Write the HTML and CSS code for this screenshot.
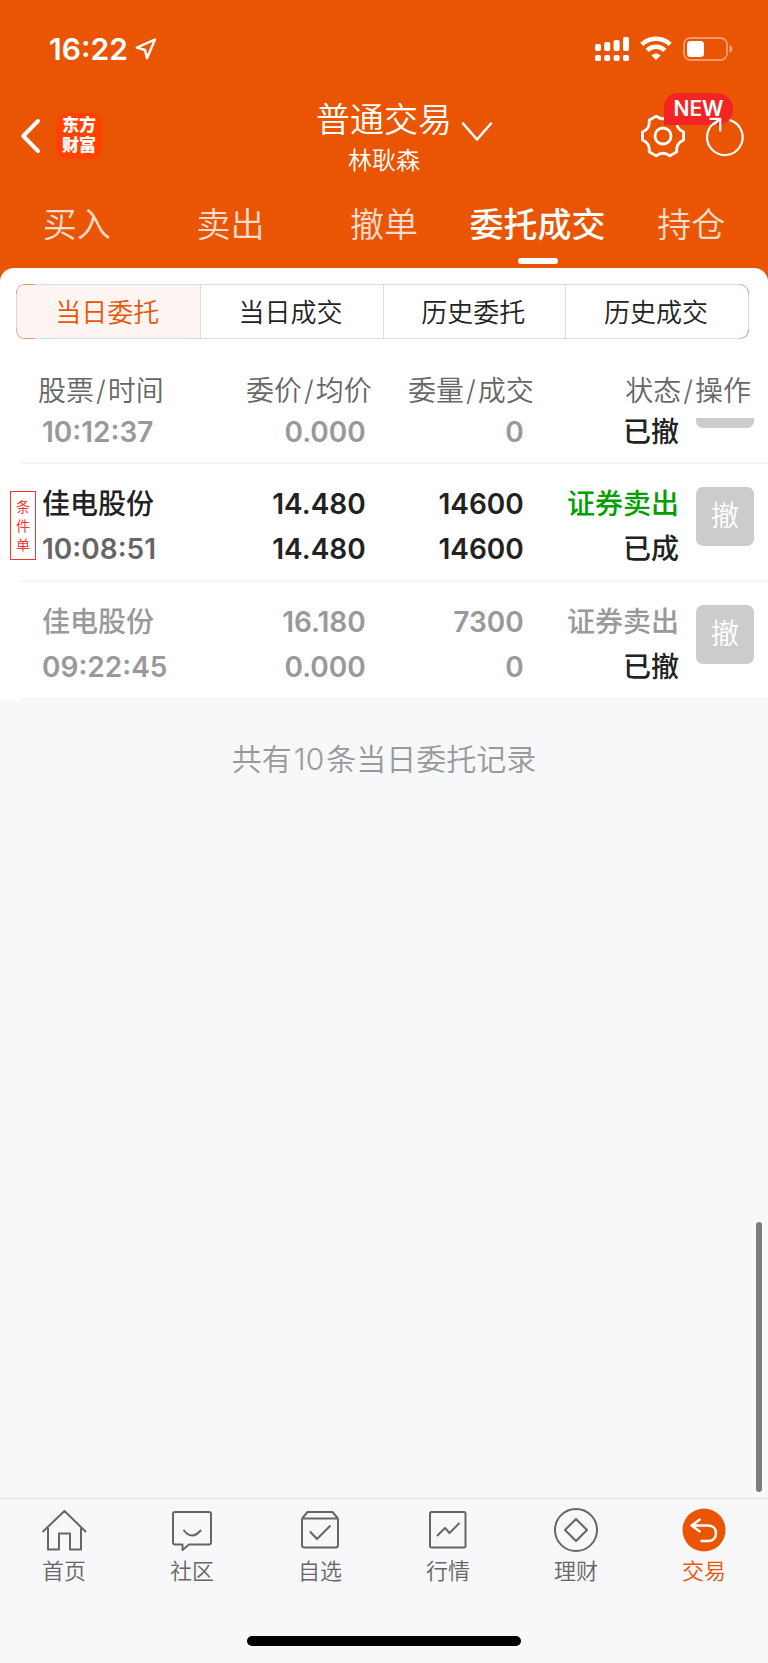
FILE: index.html
```html
<!DOCTYPE html>
<html lang="zh-CN">
<head>
  <meta charset="UTF-8">
  <title>普通交易 - 委托成交</title>
  <meta name="viewport" content="width=device-width, initial-scale=1.0">
  <link rel="stylesheet" href="styles.css">
</head>
<body>

  <header class="header">
    <div class="status-bar">
      <span class="time">16:22</span>
      <svg class="locate" width="22" height="24" viewBox="0 0 22 24" fill="none" stroke="#fff" stroke-width="2.4" stroke-linejoin="round"><path d="M20 2.5 L1.8 10.6 L10 13 L12 21.2 Z"/></svg>
      <div class="status-icons">
        <svg width="34" height="26" viewBox="0 0 34 26" fill="#fff">
          <rect x="0" y="8" width="6" height="7" rx="1.8"/><rect x="9.2" y="6" width="6" height="9" rx="1.8"/><rect x="18.6" y="4" width="6" height="11" rx="1.8"/><rect x="28" y="1" width="6" height="14" rx="1.8"/>
          <rect x="0" y="19" width="6" height="6" rx="1.8"/><rect x="9.2" y="19" width="6" height="6" rx="1.8"/><rect x="18.6" y="19" width="6" height="6" rx="1.8"/><rect x="28" y="19" width="6" height="6" rx="1.8"/>
        </svg>
        <svg width="32" height="26" viewBox="0 0 32 26" fill="none" stroke="#fff" stroke-width="4.6">
          <path d="M1.8 8.4 A20.5 20.5 0 0 1 30.2 8.4"/>
          <path d="M7.2 14.4 A12.4 12.4 0 0 1 24.8 14.4"/>
          <path d="M16 24 L11.4 19.4 A6.6 6.6 0 0 1 20.6 19.4 Z" fill="#fff" stroke="none"/>
        </svg>
        <svg width="50" height="26" viewBox="0 0 50 26">
          <rect x="1" y="2" width="43" height="22" rx="6.5" fill="none" stroke="#fff" stroke-opacity=".42" stroke-width="1.8"/>
          <rect x="4" y="5" width="17" height="16" rx="3.5" fill="#fff"/>
          <path d="M46.5 9 Q49.5 10.5 49.5 13 T46.5 17 Z" fill="#fff" fill-opacity=".5"/>
        </svg>
      </div>
    </div>

    <div class="title-bar">
      <div class="title-left">
        <button class="icon-btn" aria-label="返回">
          <svg width="20" height="36" viewBox="0 0 20 36" fill="none" stroke="#fff" stroke-width="4" stroke-linecap="round" stroke-linejoin="round"><path d="M18 3 L3.2 18 L18 33"/></svg>
        </button>
        <a class="logo" href="#">东方<br>财富</a>
      </div>
      <div class="title-text">
        <h1>普通交易</h1>
        <p>林耿森</p>
      </div>
      <div class="title-right">
        <button class="icon-btn switch" aria-label="切换账户">
          <svg width="32" height="20" viewBox="0 0 32 20" fill="none" stroke="#fff" stroke-width="2.6" stroke-linecap="round" stroke-linejoin="round"><path d="M2 1.5 L16 17.5 L30 1.5"/></svg>
        </button>
        <button class="icon-btn setting" aria-label="设置">
          <svg width="44" height="44" viewBox="0 0 44 44" fill="none" stroke="#fff" stroke-width="2.8" stroke-linejoin="round">
            <path d="M28.8 2.1 L35.8 6.2 Q34.6 14.8 42.6 18 L42.6 26 Q34.6 29.3 35.8 37.8 L28.8 41.9 Q22 36.5 15.2 41.9 L8.2 37.8 Q9.4 29.3 1.4 26 L1.4 18 Q9.4 14.8 8.2 6.2 L15.2 2.1 Q22 7.5 28.8 2.1 Z"/>
            <circle cx="22" cy="22" r="8"/>
          </svg>
          <span class="badge">NEW</span>
        </button>
        <button class="icon-btn refresh" aria-label="刷新">
          <svg width="40" height="40" viewBox="0 0 40 40" fill="none" stroke="#fff" stroke-width="2.2">
            <path d="M24.6 4.1 A17.8 17.8 0 1 1 12.6 5"/>
            <path d="M4.5 2.8 H15.2 V15.5 M15.2 2.8 L9 8.5"/>
          </svg>
        </button>
      </div>
    </div>

    <nav class="tabs">
      <a href="#">买入</a>
      <a href="#">卖出</a>
      <a href="#">撤单</a>
      <a href="#" class="active">委托成交</a>
      <a href="#">持仓</a>
    </nav>
  </header>

  <main class="main">
    <section class="panel">
      <div class="segment">
        <div class="segment-inner">
          <button class="selected">当日委托</button>
          <button>当日成交</button>
          <button>历史委托</button>
          <button>历史成交</button>
        </div>
      </div>

      <table class="orders">
        <colgroup>
          <col class="col-stock"><col class="col-price"><col class="col-amount"><col class="col-status"><col class="col-action">
        </colgroup>
        <thead>
          <tr>
            <th class="stock">股票<span class="space">/</span>时间</th>
            <th>委价<span class="space">/</span>均价</th>
            <th>委量<span class="space">/</span>成交</th>
            <th colspan="2" class="last">状态<span class="space">/</span>操作</th>
          </tr>
        </thead>
        <tbody>
          <!-- row scrolled half under the header -->
          <tr class="gray partial">
            <td class="stock">10:12:37</td>
            <td class="price">0.000</td>
            <td class="amount">0</td>
            <td class="dark">已撤</td>
            <td class="action"><button class="cancel cut" aria-label="撤"></button></td>
          </tr>
          <tr>
            <td class="stock tagged">
              <div class="stock-box">
                <span class="tag">条件单</span>
                <div>佳电股份<br><span class="clock">10:08:51</span></div>
              </div>
            </td>
            <td class="price">14.480<br>14.480</td>
            <td class="amount">14600<br>14600</td>
            <td><span class="sell">证券卖出</span><br>已成</td>
            <td class="action"><button class="cancel">撤</button></td>
          </tr>
          <tr class="gray">
            <td class="stock">佳电股份<br><span class="clock">09:22:45</span></td>
            <td class="price">16.180<br>0.000</td>
            <td class="amount">7300<br>0</td>
            <td>证券卖出<br><span class="dark">已撤</span></td>
            <td class="action"><button class="cancel">撤</button></td>
          </tr>
        </tbody>
      </table>
    </section>

    <p class="summary">共有<span class="space">10</span>条当日委托记录</p>
    <div class="scrollbar"></div>
  </main>

  <footer class="footer">
    <nav class="bottom-nav">
      <a href="#">
        <svg viewBox="0 0 44 44"><path d="M.5 24 L22.5 3 L44 24 M6 20 V41.5 H17 V25.5 H28 V41.5 H39 V20"/></svg>
        首页
      </a>
      <a href="#">
        <svg viewBox="0 0 44 44"><path d="M5 4 H39 Q41 4 41 6 V34.5 Q41 36.5 39 36.5 H19 L12.5 42 V36.5 H5 Q3 36.5 3 34.5 V6 Q3 4 5 4 Z M13.5 22 Q22 33 31 22"/></svg>
        社区
      </a>
      <a href="#">
        <svg viewBox="0 0 44 44"><path d="M4 10.5 V37 Q4 39.5 6.5 39.5 H37.5 Q40 39.5 40 37 V10.5 M4 10.5 L9.5 4 H34.5 L40 10.5 M4 10.5 H40 M12 23.5 L19 31 L32.5 17.5"/></svg>
        自选
      </a>
      <a href="#">
        <svg viewBox="0 0 44 44"><rect x="4" y="4" width="35.5" height="35.5" rx="1.5"/><path d="M11 28 L19 20 L23.5 25 L33.5 15"/></svg>
        行情
      </a>
      <a href="#">
        <svg viewBox="0 0 44 44"><circle cx="22" cy="22" r="21"/><path d="M22 11 L33 22 L22 33 L11 22 Z"/></svg>
        理财
      </a>
      <a href="#" class="active">
        <svg viewBox="0 0 44 44"><circle class="disc" cx="22" cy="22" r="21.5"/><path class="back" d="M18.5 11 L9.5 17.5 L18.5 24 M9.5 17.5 H26 C31 17.5 34 20.5 34 25 C34 29.8 31 33 26 33 H18.5"/></svg>
        交易
      </a>
    </nav>
    <div class="home-bar"></div>
  </footer>

</body>
</html>
```

FILE: styles.css
```css
* {
  box-sizing: border-box;
}
body {
  margin: 0;
  min-height: 100vh;
  display: flex;
  flex-direction: column;
  font-family: Inter, "Noto Sans CJK SC", sans-serif;
  background: #f7f8fa;
  color: #222;
}
a {
  color: inherit;
  text-decoration: none;
}
button {
  font: inherit;
  color: inherit;
  border: none;
  background: none;
  padding: 0;
  cursor: pointer;
}
svg {
  display: block;
  overflow: visible;
}
.space {
  padding: 0 2px;
}

/* header */
.header {
  background: #ea5504;
  color: #fff;
}
.status-bar {
  display: flex;
  align-items: center;
  height: 98px;
  padding: 0 35px 0 49px;
}
.time {
  font-size: 30px;
  font-weight: 600;
}
.locate {
  margin-left: 7px;
}
.status-icons {
  display: flex;
  gap: 11px;
  margin-left: auto;
}
.title-bar {
  display: grid;
  grid-template-columns: 1fr auto 1fr;
}
.title-left, .title-right {
  display: flex;
  align-items: center;
  padding-bottom: 6px;
}
.title-left {
  padding-left: 20px;
}
.title-right {
  padding-right: 23px;
}
.logo {
  width: 46px;
  height: 46px;
  margin-left: 16px;
  padding-top: 2px;
  border-radius: 9px;
  background: #ff4200;
  font-size: 17px;
  font-weight: 900;
  line-height: 20px;
  text-align: center;
}
.title-text {
  text-align: center;
}
.title-text h1 {
  margin: 0;
  font-size: 34px;
  font-weight: 350;
  line-height: 44px;
}
.title-text p {
  margin: 0;
  font-size: 24px;
  font-weight: 350;
  line-height: 38px;
}
.switch {
  margin: 0 auto 8px 9px;
}
.setting {
  position: relative;
}
.badge {
  position: absolute;
  left: 23px;
  top: -21px;
  width: 69px;
  height: 32px;
  border-radius: 14px 16px 16px 0;
  background: #f52323;
  font-size: 21px;
  font-weight: 600;
  line-height: 32px;
}
.refresh {
  position: relative;
  margin-left: 20px;
}
.tabs {
  display: grid;
  grid-template-columns: repeat(5, 1fr);
  height: 88px;
  padding-top: 14px;
  font-size: 34px;
  font-weight: 350;
  line-height: 62px;
  text-align: center;
  white-space: nowrap;
}
.tabs a {
  color: #fcdccb;
}
.tabs .active {
  color: #fff;
  font-weight: 500;
}
.tabs .active::after {
  content: "";
  display: block;
  width: 40px;
  height: 6px;
  margin: 2px auto 0;
  border-radius: 3px;
  background: #fff;
}

/* order list */
.main {
  position: relative;
  flex: 1;
  background: linear-gradient(#ea5504 20px, #f7f8fa 20px);
}
.panel {
  padding-top: 16px;
  border-radius: 14px 14px 0 0;
  background: #fff;
}
.segment {
  margin: 0 19px 0 16px;
  padding: 1px;
  border-radius: 9px;
  background:
    linear-gradient(transparent 10px, #d9dde3 10px calc(100% - 10px), transparent calc(100% - 10px)),
    linear-gradient(90deg, #ee9467 18px, #d9dde3 20px calc(100% - 10px), #ee9467 calc(100% - 8px));
}
.segment-inner {
  display: grid;
  grid-template-columns: repeat(4, 1fr);
  overflow: hidden;
  border-radius: 8px;
  background: #fff;
}
.segment button {
  height: 53px;
  padding: 0 2px 3px 0;
  font-size: 26px;
  font-weight: 350;
}
.segment button + button {
  border-left: 1px solid #d9dde3;
}
.segment .selected {
  background: #fef5f2;
  color: #ea5504;
}
.orders {
  width: 100%;
  table-layout: fixed;
  border-collapse: collapse;
  font-size: 28px;
  line-height: 45px;
  text-align: right;
  white-space: nowrap;
}
.col-stock { width: 28%; }
.col-price { width: 20.4%; }
.col-amount { width: 21.1%; }
.col-status { width: 18.9%; }
.col-action { width: 11.6%; }
.orders th {
  padding: 32px 0 7px;
  font-weight: 350;
  line-height: 40px;
  color: #666;
}
.orders .last {
  padding-right: 17px;
}
.orders th.stock {
  padding-left: 38px;
}
.orders .stock {
  text-align: left;
}
.orders td {
  padding: 18px 0 10px;
  font-weight: 500;
  vertical-align: top;
}
.orders tbody tr {
  background: linear-gradient(#f4f5f7, #f4f5f7) no-repeat 20px 100% / 100% 2px;
}
.orders td.stock {
  padding-left: 42px;
}
.orders td.tagged {
  padding-left: 10px;
}
.orders td.price, .orders td.amount, .orders .clock, .orders .partial .stock {
  font-weight: 600;
}
.orders td.price {
  padding-right: 6px;
}
.orders td.amount {
  padding-right: 10px;
}
.orders td.action {
  padding: 23px 14px 0 0;
}
.orders .gray {
  color: #999;
}
.orders .dark {
  color: #222;
}
.orders .tagged .clock {
  color: #666;
}
.orders .sell {
  color: #00a000;
}
.orders .partial td {
  padding-top: 0;
  padding-bottom: 18px;
  line-height: 28px;
}
.orders .partial .action {
  padding-top: 0;
}
.cancel {
  display: block;
  width: 58px;
  height: 59px;
  margin-left: auto;
  border-radius: 7px;
  background: #ccc;
  color: #fff;
  font-weight: 350;
}
.cut {
  height: 10px;
  border-radius: 0 0 7px 7px;
}
.stock-box {
  display: flex;
  align-items: flex-start;
  gap: 6px;
}
.tag {
  width: 26px;
  margin-top: 9px;
  padding: 5px;
  border: 1px solid #f33;
  color: #f33;
  font-size: 14px;
  font-weight: 400;
  line-height: 19px;
  white-space: normal;
}
.summary {
  margin: 37px 0 0;
  color: #999;
  font-size: 30px;
  font-weight: 350;
  line-height: 44px;
  text-align: center;
}
.scrollbar {
  position: absolute;
  right: 6px;
  bottom: 6px;
  width: 6px;
  height: 270px;
  border-radius: 3px;
  background: #7c7d7f;
}

/* bottom bar */
.footer {
  padding-bottom: 17px;
  border-top: 1px solid #dfe1e5;
  background: #f8f8fb;
}
.bottom-nav {
  display: grid;
  grid-template-columns: repeat(6, 1fr);
  padding-top: 9px;
}
.bottom-nav a {
  display: flex;
  flex-direction: column;
  align-items: center;
  color: #666;
  font-size: 22px;
  font-weight: 350;
  line-height: 38px;
}
.bottom-nav svg {
  width: 44px;
  height: 44px;
  fill: none;
  stroke: #666;
  stroke-width: 2;
  stroke-linejoin: round;
}
.bottom-nav .active {
  color: #ea5504;
}
.bottom-nav .disc {
  fill: #ea5504;
  stroke: none;
}
.bottom-nav .back {
  stroke: #fff;
  stroke-width: 2.4;
}
.home-bar {
  width: 274px;
  height: 10px;
  margin: 46px auto 0;
  border-radius: 5px;
  background: #000;
}
```
